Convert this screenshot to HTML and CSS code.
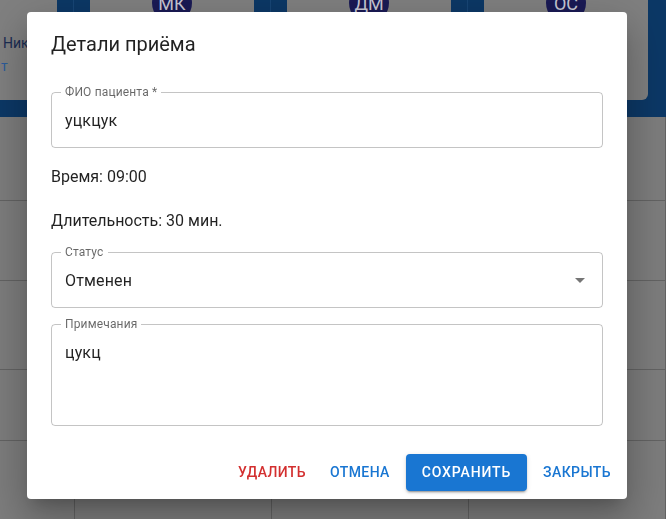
FILE: index.html
```html
<!DOCTYPE html>
<html lang="ru">
<head>
<meta charset="utf-8">
<title>Детали приёма</title>
<link rel="stylesheet" href="styles.css">
</head>
<body>
<div class="app">
  <header class="top">
    <div class="card">
      <div class="names">
        <div class="name">Никитин Н.</div>
        <div class="role">т</div>
      </div>
      <div class="strip"><span></span><span></span></div>
      <div class="avatar">МК</div>
      <div class="strip"><span></span><span></span></div>
      <div class="avatar">ДМ</div>
      <div class="strip"><span></span><span></span></div>
      <div class="avatar">ОС</div>
    </div>
  </header>
  <div class="grid">
    <div class="row r1"><div class="cell"></div><div class="cell"></div><div class="cell"></div><div class="cell"></div></div>
    <div class="row r2"><div class="cell"></div><div class="cell"></div><div class="cell"></div><div class="cell"></div></div>
    <div class="row r3"><div class="cell"></div><div class="cell"></div><div class="cell"></div><div class="cell"></div></div>
    <div class="row r4"><div class="cell"></div><div class="cell"></div><div class="cell"></div><div class="cell"></div></div>
    <div class="row r5"><div class="cell"></div><div class="cell"></div><div class="cell"></div><div class="cell"></div></div>
  </div>
</div>

<div class="overlay">
  <div class="dialog" role="dialog" aria-labelledby="dlg-title">
    <h2 class="dialog-title" id="dlg-title">Детали приёма</h2>
    <div class="dialog-content">
      <fieldset class="field f-name">
        <legend>ФИО пациента *</legend>
        <div class="value">уцкцук</div>
      </fieldset>
      <p class="info info-time">Время: 09:00</p>
      <p class="info info-dur">Длительность: 30 мин.</p>
      <fieldset class="field f-status">
        <legend>Статус</legend>
        <div class="value select">
          <span>Отменен</span>
          <svg viewBox="0 0 24 24" aria-hidden="true"><path d="M7 10l5 5 5-5z"/></svg>
        </div>
      </fieldset>
      <fieldset class="field f-notes">
        <legend>Примечания</legend>
        <div class="value notes">цукц</div>
      </fieldset>
    </div>
    <div class="dialog-actions">
      <button class="btn btn-danger" type="button">Удалить</button>
      <button class="btn" type="button">Отмена</button>
      <button class="btn btn-contained" type="button">Сохранить</button>
      <button class="btn" type="button">Закрыть</button>
    </div>
  </div>
</div>
</body>
</html>
```

FILE: styles.css
```css
* { box-sizing: border-box; }

html, body {
  margin: 0;
  height: 100%;
}

body {
  font-family: Roboto, "Noto Sans", "Liberation Sans", sans-serif;
  background: #7d7d7d;
  overflow: hidden;
}

/* ---------- background page (under backdrop) ---------- */
.top {
  height: 117px;
  background: #0c3866;
  overflow: hidden;
}

.card {
  width: 648px;
  height: 117px;
  margin-top: -17px;
  background: #808080;
  border-bottom-right-radius: 6px;
  display: flex;
  align-items: flex-start;
}

.names {
  width: 57px;
  flex-shrink: 0;
  padding-top: 50px;
  padding-left: 3px;
  white-space: nowrap;
  font-size: 14px;
  line-height: 20px;
}

.name {
  width: 24px;
  overflow: hidden;
  color: #1a2c52;
}

.role {
  margin-top: 3px;
  margin-left: -2px;
  color: #2c5c9a;
}

.strip {
  width: 33px;
  height: 60px;
  flex-shrink: 0;
  display: flex;
  gap: 1px;
  background: #184676;
}

.strip span {
  flex: 1;
  background: #0c3866;
}

.avatar {
  width: 40px;
  height: 40px;
  flex-shrink: 0;
  margin: 0 62px;
  border-radius: 50%;
  background: #1a1a55;
  color: #c8c8d4;
  font-size: 18px;
  display: flex;
  align-items: center;
  justify-content: center;
}

.row {
  display: grid;
  grid-template-columns: 75px 197px 197px 197px;
  border-bottom: 1px solid #636363;
}

.cell { border-right: 1px solid #636363; }

.r1 { height: 84px; }
.r2 { height: 80px; }
.r3 { height: 89px; }
.r4 { height: 71px; }
.r5 { height: 100px; }

/* ---------- dialog ---------- */
.overlay {
  position: fixed;
  inset: 0;
  display: flex;
  align-items: flex-start;
  padding: 12px 0 0 27px;
}

.dialog {
  width: 600px;
  background: #fff;
  border-radius: 4px;
  color: rgba(0, 0, 0, 0.87);
  box-shadow:
    0 11px 15px -7px rgba(0, 0, 0, 0.2),
    0 24px 38px 3px rgba(0, 0, 0, 0.14),
    0 9px 46px 8px rgba(0, 0, 0, 0.12);
}

.dialog-title {
  margin: 0;
  padding: 16px 24px;
  font-size: 20px;
  line-height: 32px;
  font-weight: 400;
  letter-spacing: 0;
}

.dialog-content {
  padding: 0 24px 20px;
  display: flex;
  flex-direction: column;
}

.field {
  margin: 0;
  min-width: 0;
  border: 1px solid rgba(0, 0, 0, 0.23);
  border-radius: 4px;
  padding: 0 9px;
}

.field legend {
  padding: 0 4px;
  font-size: 12px;
  line-height: 13px;
  letter-spacing: 0.15px;
  color: rgba(0, 0, 0, 0.6);
}

.value {
  padding: 9.5px 4px 15.5px;
  font-size: 16px;
  line-height: 23px;
  letter-spacing: 0.15px;
}

.f-name { margin-top: 10px; }
.f-status { margin-top: 13px; }
.f-notes { margin-top: 10px; }

.info {
  margin: 0;
  font-size: 16px;
  line-height: 24px;
  letter-spacing: 0;
}

.info-time { margin-top: 17px; }
.info-dur { margin-top: 20px; }

.select {
  height: 48px;
  display: flex;
  align-items: center;
  justify-content: space-between;
}

.select svg {
  width: 24px;
  height: 24px;
  margin-right: -3px;
  flex-shrink: 0;
  fill: rgba(0, 0, 0, 0.54);
}

.notes { height: 94px; }

.dialog-actions {
  display: flex;
  justify-content: flex-end;
  align-items: center;
  gap: 8px;
  padding: 8px;
}

.btn {
  font-family: inherit;
  font-size: 14px;
  font-weight: 500;
  line-height: 24.5px;
  letter-spacing: 0.4px;
  text-transform: uppercase;
  min-width: 64px;
  padding: 6px 8px;
  border: 0;
  border-radius: 4px;
  background: transparent;
  color: #1976d2;
  cursor: pointer;
}

.btn-danger { color: #d32f2f; }

.btn-contained {
  padding: 6px 16px;
  letter-spacing: 0.85px;
  background: #1976d2;
  color: #fff;
  box-shadow:
    0 3px 1px -2px rgba(0, 0, 0, 0.2),
    0 2px 2px 0 rgba(0, 0, 0, 0.14),
    0 1px 5px 0 rgba(0, 0, 0, 0.12);
}
```
